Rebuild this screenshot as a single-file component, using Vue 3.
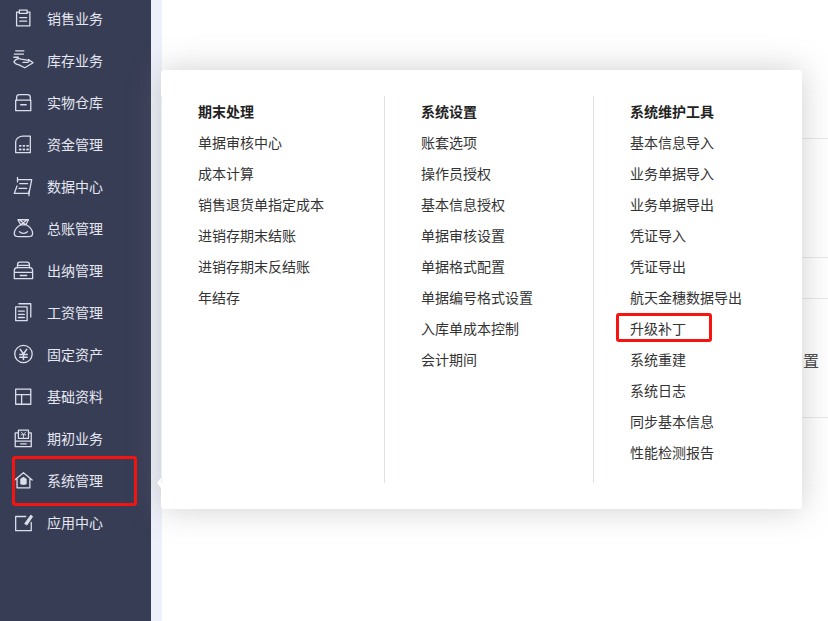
<script setup>
const menu = [
  { label: '销售业务', icon: 'sale' },
  { label: '库存业务', icon: 'hand' },
  { label: '实物仓库', icon: 'box' },
  { label: '资金管理', icon: 'bank' },
  { label: '数据中心', icon: 'scroll' },
  { label: '总账管理', icon: 'bag' },
  { label: '出纳管理', icon: 'printer' },
  { label: '工资管理', icon: 'docs' },
  { label: '固定资产', icon: 'yen' },
  { label: '基础资料', icon: 'layout' },
  { label: '期初业务', icon: 'book' },
  { label: '系统管理', icon: 'home', marked: true },
  { label: '应用中心', icon: 'edit' },
]
const columns = [
  { title: '期末处理', width: 224, items: ['单据审核中心', '成本计算', '销售退货单指定成本', '进销存期末结账', '进销存期末反结账', '年结存'] },
  { title: '系统设置', width: 209, items: ['账套选项', '操作员授权', '基本信息授权', '单据审核设置', '单据格式配置', '单据编号格式设置', '入库单成本控制', '会计期间'] },
  { title: '系统维护工具', width: 208, items: ['基本信息导入', '业务单据导入', '业务单据导出', '凭证导入', '凭证导出', '航天金穗数据导出', '升级补丁', '系统重建', '系统日志', '同步基本信息', '性能检测报告'] },
]
const lines = [138, 257, 298, 417]
</script>

<template>
  <div class="page">
    <aside class="sidebar">
      <div v-for="m in menu" :key="m.label" class="nav-item" :class="{ marked: m.marked }">
        <svg class="nav-icon" viewBox="0 0 24 24" fill="none" stroke="currentColor" stroke-width="1.4" stroke-linejoin="round" stroke-linecap="round">
          <template v-if="m.icon === 'sale'">
            <path d="M8 5.500H5v15h14.500v-15h-3" />
            <path d="M8 3.500h8.500v3.500H8zM8.500 11.500h7.500M8.500 15.500h7.500" />
          </template>
          <template v-else-if="m.icon === 'hand'">
            <path d="M4 2h9M2.500 5.500h10M2 9h5" />
            <path d="M2 14c2-3 5-4 8-3l8 1.500c1 .500 .500 2-1 2l-5 .200M2 14c1 2 3 3 5 3l7 3.500 9-5.500-5-3.500" />
          </template>
          <template v-else-if="m.icon === 'box'">
            <path d="M5 10V7c0-2 1-3 3-3h9c2 0 3 1 3 3v3" />
            <path d="M4 10h16.500v11.500H4zM9.500 15h6" />
          </template>
          <template v-else-if="m.icon === 'bank'">
            <path d="M4 21.500V9.500C4 6 8 3.500 12 3.500h8v18z" />
            <path d="M8.500 14h1M12.500 14h1M16.500 14h1M8.500 18h1M12.500 18h1M16.500 18h1" stroke-width="2" />
          </template>
          <template v-else-if="m.icon === 'scroll'">
            <path d="M6 5h15.500l-3 15H2.500l3-8" />
            <path d="M8.500 9.500h8.500M7.500 14.500h8.500M18.500 17.500v5M6 7.500V2.500" />
          </template>
          <template v-else-if="m.icon === 'bag'">
            <path d="M6.500 3h11.500l-3 5.500h-5.500zM8 3l7 5.500M16.500 3l-7 5.500" />
            <path d="M9.500 8.500C5 11 2.500 15 2.500 18c0 2 2 3.500 5 3.500h10c3 0 5-1.500 5-3.500 0-3-2.500-7-7-9.500" />
            <path d="M8 16c2 2.500 7 2.500 9 0" />
          </template>
          <template v-else-if="m.icon === 'printer'">
            <path d="M6 9.500V6c0-1.500 1-2.500 2.500-2.500h8C18 3.500 19 4.500 19 6v3.500M6 7h13" />
            <path d="M2.500 13c0-2.500 1-3.500 3-3.500h14c2 0 3 1 3 3.500v8.500h-20zM2.500 14.500h20M9 18h7" />
          </template>
          <template v-else-if="m.icon === 'docs'">
            <path d="M4 6.500h12.500V21.500H4zM7.500 3h13v14.500" />
            <path d="M7 11h6.500M7 14.500h6.500M7 18h6.500" />
          </template>
          <template v-else-if="m.icon === 'yen'">
            <circle cx="12.500" cy="12" r="9.500" />
            <path d="M9 7l3.500 5L16 7M8.500 12.500h8M8.500 15.500h8M12.500 12v6" stroke-width="1.700" />
          </template>
          <template v-else-if="m.icon === 'layout'">
            <path d="M4 4.500h16.500v16.500H4zM4 10.500h16.500M10.500 10.500v10.500" />
          </template>
          <template v-else-if="m.icon === 'book'">
            <path d="M7 3.500h11v9H7zM7 6.500H3.500v15H21v-15h-3M3.500 15.500H21M9.500 18.500h6" />
            <path d="M10 5.500l2.500 2.500L15 5.500M10 8.500h5M12.500 8v4" stroke-width="1" />
          </template>
          <template v-else-if="m.icon === 'home'">
            <path d="M3 12L12.500 4 22 12M5.500 11V20.500h14V11" />
            <path d="M9 11l3.500-2.500L16 11v5.500H9z" fill="currentColor" stroke="none" />
            <path d="M11 16.500h3" />
          </template>
          <template v-else>
            <path d="M21 12.500v9H4V6h11" />
            <path d="M14 13.500l6.500-9 2 1.500-6 9z" fill="currentColor" stroke-width="1" />
          </template>
        </svg>
        <span class="nav-label">{{ m.label }}</span>
      </div>
    </aside>

    <div class="gutter"></div>

    <main class="content">
      <div class="peek">置</div>
      <i v-for="y in lines" :key="y" class="rule" :style="{ top: y + 'px' }"></i>
    </main>

    <section class="panel">
      <span class="pointer"></span>
      <div v-for="(c, ci) in columns" :key="c.title" class="column" :class="{ first: ci === 0 }" :style="{ width: c.width + 'px' }">
        <h3 class="col-title">{{ c.title }}</h3>
        <a v-for="it in c.items" :key="it" class="col-link" :class="{ flagged: it === '升级补丁' }">{{ it }}</a>
      </div>
    </section>
  </div>
</template>

<style>
html, body { margin: 0; background: #fff; }
</style>

<style scoped>
.page {
  position: relative;
  display: flex;
  width: 828px;
  height: 621px;
  overflow: hidden;
  background: #fff;
  font-family: "Noto Sans CJK SC", "Noto Sans", sans-serif;
}
.sidebar {
  flex: 0 0 151px;
  background: #383d56;
  color: #e4e7f0;
  box-sizing: border-box;
}
.nav-item {
  position: relative;
  display: flex;
  align-items: center;
  height: 42px;
  margin-top: -3px;
  margin-bottom: 3px;
  font-size: 14px;
}
.nav-icon {
  flex: none;
  width: 22px;
  height: 22px;
  margin-left: 12px;
  margin-right: 13px;
  color: #dcdfea;
}
.nav-label { line-height: 20px; }
.marked::after {
  content: "";
  position: absolute;
  left: 12px;
  top: -3px;
  width: 125px;
  height: 50px;
  box-sizing: border-box;
  border: 3px solid #f5140f;
  border-radius: 3px;
}
.gutter { flex: 0 0 11px; background: #eef1f9; }
.content { position: relative; flex: 1; background: #fff; }
.rule {
  position: absolute;
  left: 0;
  right: 0;
  height: 1px;
  background: #e8e8e8;
}
.peek {
  position: absolute;
  left: 641px;
  top: 349px;
  font-size: 16px;
  line-height: 22px;
  color: #444;
}
.panel {
  position: absolute;
  left: 161px;
  top: 70px;
  display: flex;
  width: 641px;
  height: 439px;
  padding-top: 26px;
  box-sizing: border-box;
  background: #fff;
  border-radius: 3px;
  box-shadow: 0 0 32px rgba(130, 130, 135, 0.38);
}
.pointer {
  position: absolute;
  left: -4px;
  top: 408px;
  width: 0;
  height: 0;
  border-top: 5px solid transparent;
  border-bottom: 5px solid transparent;
  border-right: 4px solid #fff;
}
.column {
  height: 387px;
  box-sizing: border-box;
  padding-left: 36px;
  border-right: 1px solid #dfe1ea;
  color: #333;
}
.column:last-child { border-right: 0; }
.first { border-left: 1px solid #eceef4; }
.col-title {
  margin: 0;
  height: 31px;
  line-height: 31px;
  font-size: 14px;
  font-weight: 700;
  color: #222;
}
.col-link {
  display: block;
  width: fit-content;
  position: relative;
  height: 31px;
  line-height: 31px;
  font-size: 14px;
}
.flagged::after {
  content: "";
  position: absolute;
  left: -14px;
  top: 0;
  width: 96px;
  height: 29px;
  box-sizing: border-box;
  border: 3px solid #f5140f;
  border-radius: 3px;
}
</style>
